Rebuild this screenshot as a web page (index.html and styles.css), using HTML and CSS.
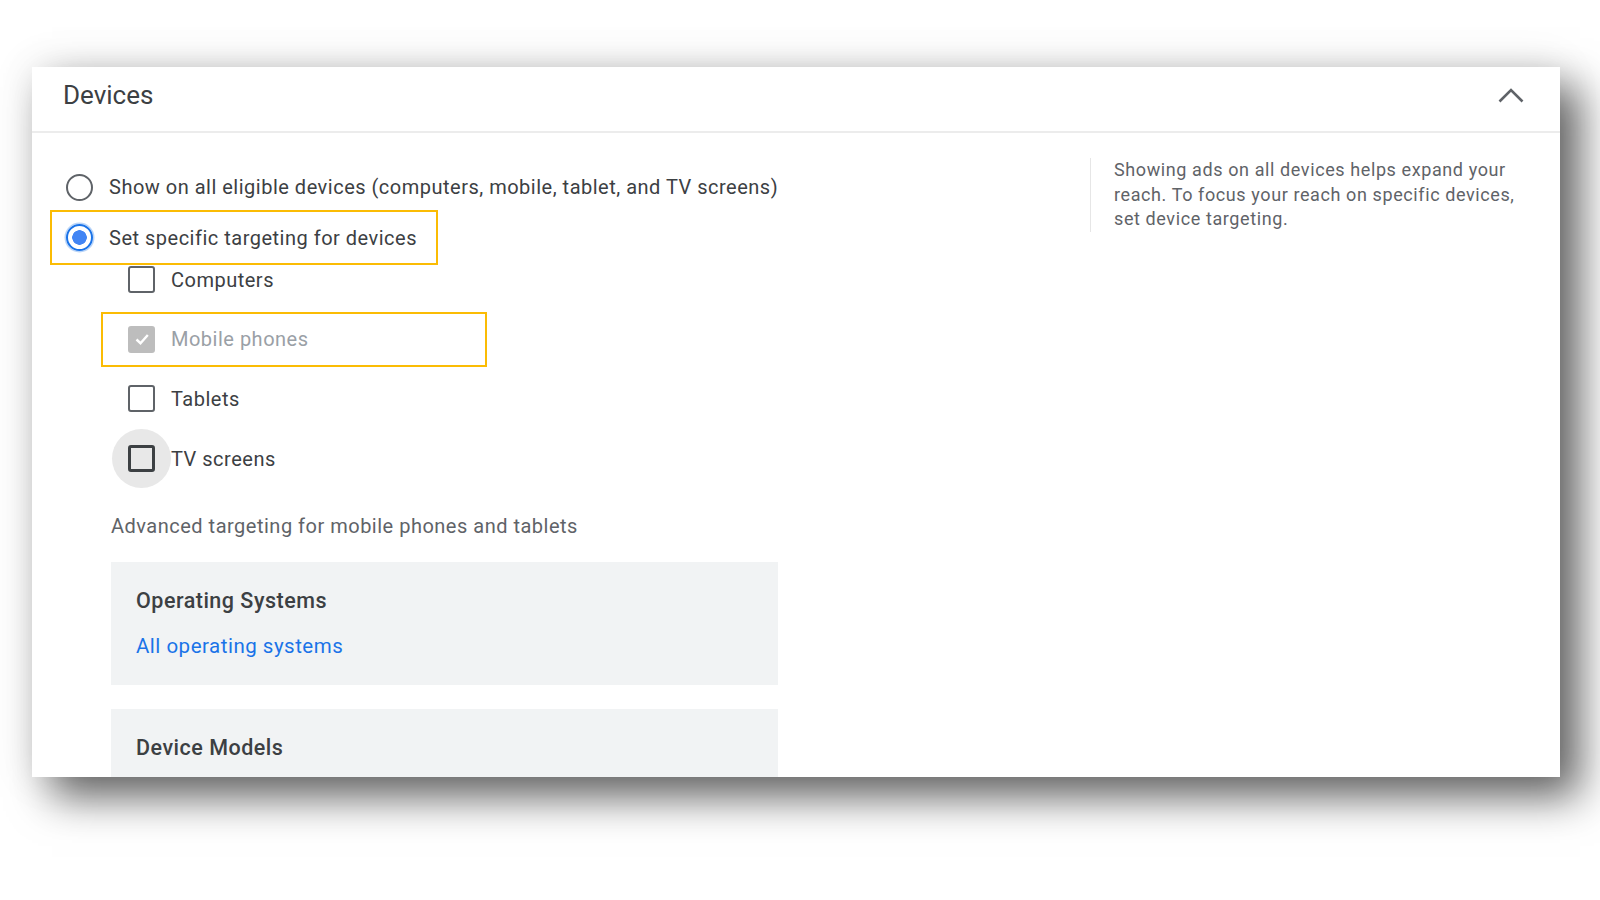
FILE: index.html
```html
<!DOCTYPE html>
<html lang="en">
<head>
    <meta charset="UTF-8">
    <meta name="viewport" content="width=device-width, initial-scale=1.0">
    <title>Devices</title>
    <link rel="stylesheet" href="styles.css">
</head>
<body>
    <div class="card">
        <div class="card-header">
            <h2 class="card-title">Devices</h2>
            <svg class="chevron" width="26" height="16" viewBox="0 0 26 16">
                <path d="M1.5 14.5 L13 3 L24.5 14.5" fill="none" stroke="#5f6368" stroke-width="2.6"/>
            </svg>
        </div>

        <div class="card-body">
            <div class="options">
                <label class="radio-row">
                    <span class="radio"></span>
                    Show on all eligible devices (computers, mobile, tablet, and TV screens)
                </label>
                <label class="radio-row highlight">
                    <span class="radio checked"></span>
                    Set specific targeting for devices
                </label>

                <div class="check-list">
                    <label class="check-row">
                        <span class="checkbox"></span>
                        Computers
                    </label>
                    <label class="check-row highlight-box disabled">
                        <span class="checkbox checked">
                            <svg width="18" height="18" viewBox="0 0 18 18"><path d="M3.5 9.5 L7.5 13.2 L14.8 5" fill="none" stroke="#fff" stroke-width="2.4"/></svg>
                        </span>
                        Mobile phones
                    </label>
                    <label class="check-row">
                        <span class="checkbox"></span>
                        Tablets
                    </label>
                    <label class="check-row">
                        <span class="checkbox hover"></span>
                        TV screens
                    </label>
                </div>

                <p class="advanced-note">Advanced targeting for mobile phones and tablets</p>

                <div class="sub-panel">
                    <h3>Operating Systems</h3>
                    <a href="#" class="link">All operating systems</a>
                </div>
                <div class="sub-panel">
                    <h3>Device Models</h3>
                </div>
            </div>

            <aside class="hint">
                Showing ads on all devices helps expand your reach. To focus your reach on specific devices, set device targeting.
            </aside>
        </div>
    </div>
</body>
</html>
```

FILE: styles.css
```css
body {
    margin: 0;
    min-height: 900px;
    background: #fff;
    font-family: Roboto, "Liberation Sans", Arial, sans-serif;
    color: #3c4043;
    overflow: hidden;
}

.card {
    width: 1528px;
    height: 710px;
    margin-left: 32px;
    position: relative;
    top: 67px;
    background: #fff;
    overflow: hidden;
    box-shadow: 20px 20px 40px rgba(0, 0, 0, 0.6), 0 0 40px rgba(0, 0, 0, 0.1);
}

.card-header {
    display: flex;
    align-items: center;
    justify-content: space-between;
    padding: 0 36px 8px 31px;
    box-sizing: border-box;
    border-bottom: 2px solid #ececec;
    height: 66px;
}

.card-title {
    margin: 0;
    font-size: 26px;
    font-weight: 400;
    color: #3c4043;
}

.chevron {
    display: block;
}

.card-body {
    display: grid;
    grid-template-columns: 1058px 1fr;
}

.options {
    padding: 29px 0 0 34px;
}

/* radio rows */
.radio-row {
    display: flex;
    align-items: center;
    height: 50px;
    font-size: 20px;
    letter-spacing: 0.5px;
    color: #3c4043;
    width: max-content;
}

.radio {
    width: 27px;
    height: 27px;
    border: 2.5px solid #5f6368;
    border-radius: 50%;
    box-sizing: border-box;
    margin-right: 16px;
    flex-shrink: 0;
}

.radio.checked {
    border-color: #1a73e8;
    box-shadow: 0 0 0 1.5px rgba(26, 115, 232, 0.3);
    background: radial-gradient(circle, #4285f4 0 7px, #fff 7.5px);
}

.highlight {
    border: 2px solid #fbbc04;
    margin: -2px 0 -2px -16px;
    padding: 0 0 0 14px;
    width: 388px;
    box-sizing: border-box;
    height: 55px;
}

/* checkboxes */
.check-list {
    margin: -15px 0 0 62px;
}

.check-row {
    display: flex;
    align-items: center;
    height: 59.6px;
    font-size: 20px;
    letter-spacing: 0.5px;
    color: #3c4043;
    width: max-content;
}

.checkbox {
    position: relative;
    width: 27px;
    height: 27px;
    border: 2.5px solid #5f6368;
    border-radius: 3px;
    box-sizing: border-box;
    margin-right: 16px;
    flex-shrink: 0;
    display: flex;
    align-items: center;
    justify-content: center;
}

.checkbox.checked {
    background: #bdbdbd;
    border-color: #bdbdbd;
}

.checkbox.hover {
    border-color: #3c4043;
    border-width: 3px;
}

.checkbox.hover::before {
    content: "";
    position: absolute;
    left: 50%;
    top: 50%;
    width: 59px;
    height: 59px;
    margin: -29.5px 0 0 -29.5px;
    border-radius: 50%;
    background: #e8e8e8;
    z-index: -1;
}

.check-row:has(.hover) {
    position: relative;
    z-index: 0;
}

.highlight-box {
    border: 2px solid #fbbc04;
    height: 55.6px;
    width: 386px;
    box-sizing: border-box;
    margin: 2px 0 2px -27px;
    padding-left: 25px;
}

.disabled {
    color: #9aa0a6;
}

.advanced-note {
    margin: 26px 0 0 45px;
    font-size: 20px;
    letter-spacing: 0.5px;
    line-height: 24px;
    color: #5f6368;
}

.sub-panel {
    margin: 24px 0 0 45px;
    width: 667px;
    height: 123px;
    padding: 27px 25px 0;
    box-sizing: border-box;
    background: #f1f3f4;
}

.sub-panel h3 {
    margin: 0 0 21px;
    font-size: 21.5px;
    font-weight: 500;
    letter-spacing: 0.5px;
    line-height: 24px;
    color: #3c4043;
}

.link {
    font-size: 20.5px;
    letter-spacing: 0.5px;
    line-height: 24px;
    color: #1a73e8;
    text-decoration: none;
}

.hint {
    margin-top: 25px;
    align-self: start;
    width: 412px;
    border-left: 1.5px solid #e6e6e6;
    padding-left: 23px;
    font-size: 18px;
    letter-spacing: 0.6px;
    line-height: 24.5px;
    color: #5f6368;
}
```
